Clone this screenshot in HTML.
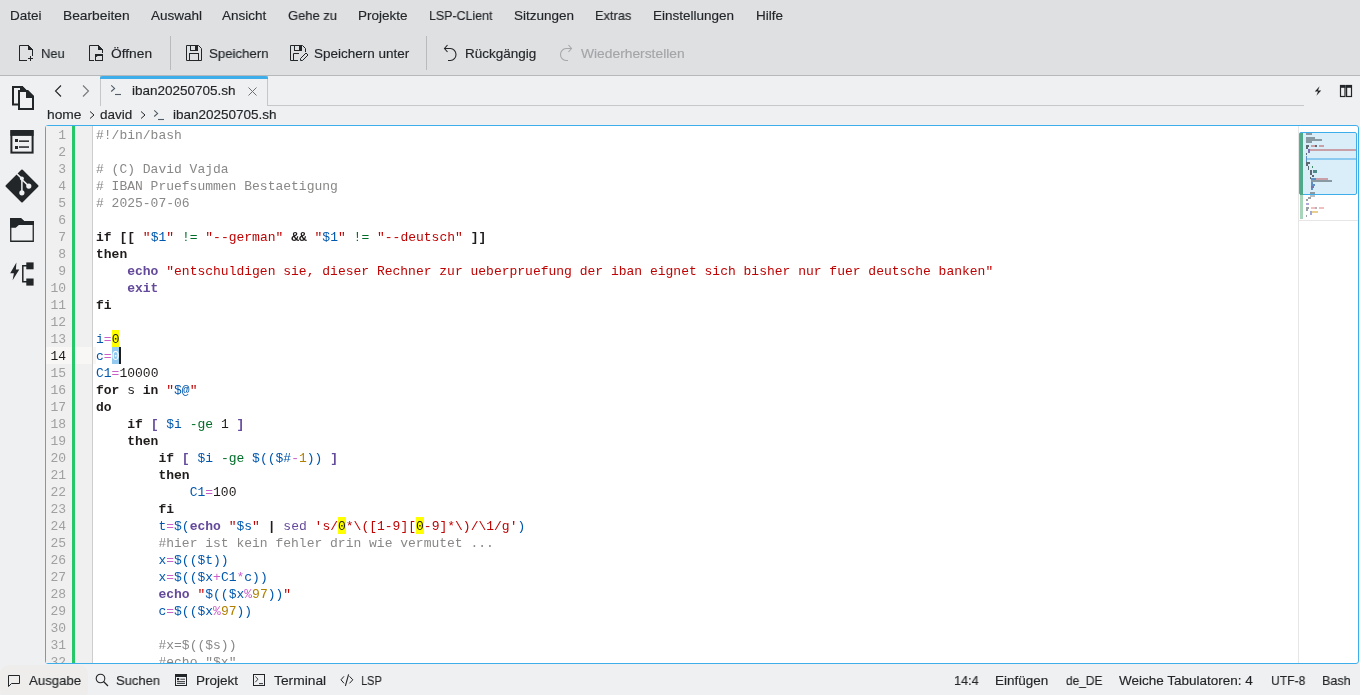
<!DOCTYPE html>
<html><head><meta charset="utf-8"><style>
html,body{margin:0;padding:0}
body{width:1360px;height:695px;overflow:hidden;position:relative;background:#eff0f1;font-family:"Liberation Sans", sans-serif}
.t{position:absolute;white-space:pre;line-height:16px;will-change:transform;-webkit-text-stroke:0.15px currentColor}
.ln{position:absolute;left:45.5px;width:20px;padding-top:1px;text-align:right;font-family:"Liberation Mono", monospace;font-size:13px;line-height:17px;will-change:transform}
.cl{position:absolute;left:96px;padding-top:1px;white-space:pre;font-family:"Liberation Mono", monospace;font-size:13px;line-height:17px;color:#1f1c1b;will-change:transform}
.c{color:#898887} .k{font-weight:bold} .s{color:#bf0303} .v{color:#0057ae} .o{color:#006e28}
.b{color:#644a9b;font-weight:bold} .f{color:#644a9b} .p{color:#ca60ca} .d{color:#b08000}
.hl{} .shl{color:#1f1c1b} .sel{color:#fff}
</style></head><body>
<div style="position:absolute;left:0px;top:0px;width:1360px;height:75px;background:#dee0e2;"></div>
<div style="position:absolute;left:0px;top:75px;width:1360px;height:1px;background:#b6b9bc;"></div>
<div class="t" style="left:10.0px;top:8px;font-size:13.5px;color:#232629;">Datei</div>
<div class="t" style="left:62.699999999999996px;top:8px;font-size:13.5px;color:#232629;transform:scaleX(1.021);transform-origin:0 0;">Bearbeiten</div>
<div class="t" style="left:150.60000000000002px;top:8px;font-size:13.5px;color:#232629;">Auswahl</div>
<div class="t" style="left:222.3px;top:8px;font-size:13.5px;color:#232629;">Ansicht</div>
<div class="t" style="left:287.8px;top:8px;font-size:13.5px;color:#232629;transform:scaleX(0.961);transform-origin:0 0;">Gehe zu</div>
<div class="t" style="left:357.8px;top:8px;font-size:13.5px;color:#232629;">Projekte</div>
<div class="t" style="left:428.90000000000003px;top:8px;font-size:13.5px;color:#232629;transform:scaleX(0.919);transform-origin:0 0;">LSP-CLient</div>
<div class="t" style="left:513.6999999999999px;top:8px;font-size:13.5px;color:#232629;">Sitzungen</div>
<div class="t" style="left:594.9px;top:8px;font-size:13.5px;color:#232629;transform:scaleX(0.950);transform-origin:0 0;">Extras</div>
<div class="t" style="left:652.5px;top:8px;font-size:13.5px;color:#232629;">Einstellungen</div>
<div class="t" style="left:755.9px;top:8px;font-size:13.5px;color:#232629;">Hilfe</div>
<div class="t" style="left:40.8px;top:46px;font-size:13.5px;color:#232629;transform:scaleX(0.960);transform-origin:0 0;">Neu</div>
<div class="t" style="left:110.8px;top:46px;font-size:13.5px;color:#232629;transform:scaleX(1.020);transform-origin:0 0;">Öffnen</div>
<div class="t" style="left:208.5px;top:46px;font-size:13.5px;color:#232629;transform:scaleX(0.980);transform-origin:0 0;">Speichern</div>
<div class="t" style="left:313.6px;top:46px;font-size:13.5px;color:#232629;">Speichern unter</div>
<div class="t" style="left:464.7px;top:46px;font-size:13.5px;color:#232629;">Rückgängig</div>
<div class="t" style="left:580.5999999999999px;top:46px;font-size:13.5px;color:#a3a5a7;transform:scaleX(1.023);transform-origin:0 0;">Wiederherstellen</div>
<div style="position:absolute;left:170px;top:36px;width:1px;height:34px;background:#b8bbbe;"></div>
<div style="position:absolute;left:426px;top:36px;width:1px;height:34px;background:#b8bbbe;"></div>
<svg style="position:absolute;left:16px;top:42px" width="20" height="22" viewBox="16 42 20 22" fill="none" stroke="#232629" stroke-width="1"><path d="M19.5 61V45.5H28.5L32.5 49.5V56M19.5 60.5H27M28.5 45.5V49.5H32.5M28 58.5H33M30.5 56V61"/><path d="M28.5 45.5L32.5 49.5H28.5Z" fill="#232629"/></svg>
<svg style="position:absolute;left:86px;top:42px" width="20" height="22" viewBox="86 42 20 22" fill="none" stroke="#232629" stroke-width="1"><path d="M89.5 61V45.5H98.5L102.5 49.5V53M89.5 60.5H94M98.5 45.5V49.5H102.5"/><path d="M98.5 45.5L102.5 49.5H98.5Z" fill="#232629"/><rect x="95.5" y="54.5" width="7" height="6"/><path d="M95 54H98.5L99.5 55H103V56H97.5L96.5 57H95Z" fill="#232629" stroke="none"/></svg>
<svg style="position:absolute;left:184px;top:42px" width="20" height="22" viewBox="184 42 20 22" fill="none" stroke="#232629" stroke-width="1"><path d="M186.5 45.5H198.5L201.5 48.5V60.5H186.5Z"/><rect x="190.5" y="45.5" width="7" height="5"/><rect x="195" y="45" width="3" height="6" fill="#232629" stroke="none"/><rect x="189.5" y="53.5" width="9" height="7"/></svg>
<svg style="position:absolute;left:288px;top:42px" width="22" height="22" viewBox="288 42 22 22" fill="none" stroke="#232629" stroke-width="1"><path d="M298 60.5H290.5V45.5H302.5L305.5 48.5V52M293.5 60.5V53.5H299"/><rect x="294.5" y="45.5" width="7" height="5"/><rect x="299" y="45" width="3" height="6" fill="#232629" stroke="none"/><path d="M300.5 60.5V58.5L306 53L308 55L302.5 60.5Z"/></svg>
<svg style="position:absolute;left:440px;top:42px" width="20" height="22" viewBox="440 42 20 22" fill="none" stroke="#232629" stroke-width="1"><path d="M447.5 45L444.5 48.5L447.5 52M444.5 48.5H450.5A5.5 6 0 0 1 450.5 60.5H448" stroke-width="1.1"/></svg>
<svg style="position:absolute;left:556px;top:42px" width="20" height="22" viewBox="556 42 20 22" fill="none" stroke="#232629" stroke-width="1"><path d="M568.5 45L571.5 48.5L568.5 52M571.5 48.5H566A5.5 6 0 0 0 566 60.5H568" stroke="#a5a7a9" stroke-width="1.1"/></svg>
<svg style="position:absolute;left:8px;top:82px" width="30" height="32" viewBox="8 82 30 32" fill="none" stroke="#232629" stroke-width="1"><path d="M19 104.5H13V87H22L26.5 91.5" stroke-width="2"/><path d="M20 86H22.4L26.6 90.2V91H20Z" fill="#232629" stroke="none"/><path d="M18 90H27.7L34 96.3V110H18Z" fill="#eff0f1" stroke="none"/><path d="M19 91H27.3L33 96.7V109H19Z" stroke-width="2"/><path d="M26 90H28L34 96V98H26Z" fill="#232629" stroke="none"/></svg>
<svg style="position:absolute;left:8px;top:126px" width="30" height="32" viewBox="8 126 30 32" fill="none" stroke="#232629" stroke-width="1"><rect x="11.4" y="131.1" width="21.2" height="21.5" stroke-width="2"/><rect x="10.4" y="130.1" width="23.2" height="5.8" fill="#232629" stroke="none"/><rect x="15" y="139" width="3" height="3" fill="#232629" stroke="none"/><rect x="15" y="146" width="3" height="3" fill="#232629" stroke="none"/><rect x="19" y="140.4" width="10" height="1.5" fill="#232629" stroke="none"/><rect x="19" y="146.3" width="10" height="1.5" fill="#232629" stroke="none"/></svg>
<svg style="position:absolute;left:2px;top:166px" width="40" height="40" viewBox="2 166 40 40" fill="none" stroke="#232629" stroke-width="1"><path d="M22 170.5L37.5 186L22 201.5L6.5 186Z" fill="#232629" stroke-width="2" stroke-linejoin="round"/><path d="M15.5 172.5L21.9 178.6V192.8M21.9 179.5L28.8 186.1" stroke="#eff0f1" stroke-width="1.5"/><circle cx="21.9" cy="178.6" r="2" fill="#eff0f1" stroke="none"/><circle cx="28.8" cy="186.1" r="2.6" fill="#eff0f1" stroke="none"/><circle cx="21.9" cy="192.8" r="2.6" fill="#eff0f1" stroke="none"/></svg>
<svg style="position:absolute;left:6px;top:214px" width="34" height="32" viewBox="6 214 34 32" fill="none" stroke="#232629" stroke-width="1"><path d="M10.75 218.75H20.7L24 221.75H33.25V241.25H10.75Z" stroke-width="1.3"/><path d="M10.1 218.1H20.7L24 221.1H33.9V225H18.9L15.7 227.8H10.1Z" fill="#232629" stroke="none"/></svg>
<svg style="position:absolute;left:6px;top:258px" width="34" height="32" viewBox="6 258 34 32" fill="none" stroke="#232629" stroke-width="1"><path d="M16.4 262.6L10.2 273.3H13.9L12.6 280.2L19.3 269.4H15.9Z" fill="#232629" stroke="none"/><path d="M27 265.7H22.8V281.7H27" stroke-width="1.5"/><rect x="26.3" y="262.4" width="7.3" height="6.9" fill="#232629" stroke="none"/><rect x="26.3" y="278.5" width="7.3" height="7.1" fill="#232629" stroke="none"/></svg>
<svg style="position:absolute;left:53px;top:84px" width="10" height="14" viewBox="0 0 10 14"><path d="M8 1.5L2.5 7 8 12.5" fill="none" stroke="#232629" stroke-width="1.1"/></svg>
<svg style="position:absolute;left:81px;top:84px" width="10" height="14" viewBox="0 0 10 14"><path d="M2 1.5L7.5 7 2 12.5" fill="none" stroke="#76787a" stroke-width="1.1"/></svg>
<div style="position:absolute;left:100px;top:76px;width:168px;height:30px;background:#eff0f1;border-left:1px solid #c5c7c9;border-right:1px solid #c5c7c9;box-sizing:border-box"></div>
<div style="position:absolute;left:100px;top:76px;width:168px;height:3px;background:#3daee9;border-radius:2px 2px 0 0"></div>
<div style="position:absolute;left:267px;top:105px;width:1037px;height:1px;background:#c5c7c9;"></div>
<svg style="position:absolute;left:110px;top:84px" width="12" height="12" viewBox="0 0 12 12"><path d="M1.2 1.3L4.6 4.4L1.2 7.5" fill="none" stroke="#4f5b67" stroke-width="1.1"/><path d="M5 10.5h6" stroke="#4f5b67" stroke-width="1.1"/></svg>
<div class="t" style="left:132px;top:83px;font-size:13.5px;color:#232629;">iban20250705.sh</div>
<svg style="position:absolute;left:246.5px;top:86px" width="11" height="11" viewBox="0 0 11 11"><path d="M1.5 1.5l8 8M9.5 1.5l-8 8" stroke="#6e7072" stroke-width="1"/></svg>
<svg style="position:absolute;left:1310px;top:82px" width="16" height="18" viewBox="1310 82 16 18" fill="none" stroke="#232629" stroke-width="1"><path d="M1319.6 86.3L1314.8 91.6H1318L1316.4 95.8L1321.2 90.4H1318Z" fill="#232629" stroke="none"/></svg>
<svg style="position:absolute;left:1336px;top:82px" width="20" height="18" viewBox="1336 82 20 18" fill="none" stroke="#232629" stroke-width="1"><rect x="1340.5" y="85.5" width="4.5" height="11" stroke-width="1.2"/><rect x="1346.6" y="85.5" width="4.9" height="11" stroke-width="1.2"/><rect x="1340" y="85" width="5.5" height="2.8" fill="#232629" stroke="none"/><rect x="1346" y="85" width="6" height="2.8" fill="#232629" stroke="none"/></svg>
<div class="t" style="left:47px;top:107px;font-size:13.5px;color:#232629;transform:scaleX(1.021);transform-origin:0 0;">home</div>
<svg style="position:absolute;left:88px;top:109px" width="8" height="12" viewBox="0 0 8 12"><path d="M2 2.5l4 3.5-4 3.5" fill="none" stroke="#232629" stroke-width="1"/></svg>
<div class="t" style="left:99.8px;top:107px;font-size:13.5px;color:#232629;">david</div>
<svg style="position:absolute;left:139px;top:109px" width="8" height="12" viewBox="0 0 8 12"><path d="M2 2.5l4 3.5-4 3.5" fill="none" stroke="#232629" stroke-width="1"/></svg>
<svg style="position:absolute;left:153px;top:109px" width="12" height="12" viewBox="0 0 12 12"><path d="M1.2 1.3L4.6 4.4L1.2 7.5" fill="none" stroke="#4f5b67" stroke-width="1.1"/><path d="M5 10.5h6" stroke="#4f5b67" stroke-width="1.1"/></svg>
<div class="t" style="left:173px;top:107px;font-size:13.5px;color:#232629;">iban20250705.sh</div>
<div style="position:absolute;left:45px;top:125px;width:1314px;height:539px;box-sizing:border-box;border:1px solid #3daee9;border-radius:3px;background:#fff;overflow:hidden">
</div>
<div style="position:absolute;left:0;top:0;width:1360px;height:663px;overflow:hidden">
<div style="position:absolute;left:46px;top:126px;width:26px;height:537px;background:#f0f0f0;"></div>
<div style="position:absolute;left:72px;top:126px;width:3px;height:537px;background:#27c86a;"></div>
<div style="position:absolute;left:75px;top:126px;width:17px;height:537px;background:#f0f0f0;"></div>
<div style="position:absolute;left:92px;top:126px;width:1px;height:537px;background:#cdcdcd;"></div>
<div style="position:absolute;left:46px;top:347px;width:26px;height:17px;background:#f8f7f6;"></div>
<div style="position:absolute;left:75px;top:347px;width:17px;height:17px;background:#f8f7f6;"></div>
<div style="position:absolute;left:93px;top:347px;width:3px;height:17px;background:#f8f7f6;"></div>
<div class="ln" style="top:126px;color:#a0a0a0">1</div>
<div class="ln" style="top:143px;color:#a0a0a0">2</div>
<div class="ln" style="top:160px;color:#a0a0a0">3</div>
<div class="ln" style="top:177px;color:#a0a0a0">4</div>
<div class="ln" style="top:194px;color:#a0a0a0">5</div>
<div class="ln" style="top:211px;color:#a0a0a0">6</div>
<div class="ln" style="top:228px;color:#a0a0a0">7</div>
<div class="ln" style="top:245px;color:#a0a0a0">8</div>
<div class="ln" style="top:262px;color:#a0a0a0">9</div>
<div class="ln" style="top:279px;color:#a0a0a0">10</div>
<div class="ln" style="top:296px;color:#a0a0a0">11</div>
<div class="ln" style="top:313px;color:#a0a0a0">12</div>
<div class="ln" style="top:330px;color:#a0a0a0">13</div>
<div class="ln" style="top:347px;color:#1f1c1b">14</div>
<div class="ln" style="top:364px;color:#a0a0a0">15</div>
<div class="ln" style="top:381px;color:#a0a0a0">16</div>
<div class="ln" style="top:398px;color:#a0a0a0">17</div>
<div class="ln" style="top:415px;color:#a0a0a0">18</div>
<div class="ln" style="top:432px;color:#a0a0a0">19</div>
<div class="ln" style="top:449px;color:#a0a0a0">20</div>
<div class="ln" style="top:466px;color:#a0a0a0">21</div>
<div class="ln" style="top:483px;color:#a0a0a0">22</div>
<div class="ln" style="top:500px;color:#a0a0a0">23</div>
<div class="ln" style="top:517px;color:#a0a0a0">24</div>
<div class="ln" style="top:534px;color:#a0a0a0">25</div>
<div class="ln" style="top:551px;color:#a0a0a0">26</div>
<div class="ln" style="top:568px;color:#a0a0a0">27</div>
<div class="ln" style="top:585px;color:#a0a0a0">28</div>
<div class="ln" style="top:602px;color:#a0a0a0">29</div>
<div class="ln" style="top:619px;color:#a0a0a0">30</div>
<div class="ln" style="top:636px;color:#a0a0a0">31</div>
<div class="ln" style="top:653px;color:#a0a0a0">32</div>
<div style="position:absolute;left:111.6px;top:330px;width:7.8px;height:17px;background:#ffff00;"></div>
<div style="position:absolute;left:111.6px;top:347px;width:7.8px;height:17px;background:#94caef;"></div>
<div style="position:absolute;left:337.8px;top:517px;width:7.8px;height:17px;background:#ffff00;"></div>
<div style="position:absolute;left:415.8px;top:517px;width:7.8px;height:17px;background:#ffff00;"></div>
<div class="cl" style="top:126px"><span class="c">#!/bin/bash</span></div>
<div class="cl" style="top:143px"></div>
<div class="cl" style="top:160px"><span class="c"># (C) David Vajda</span></div>
<div class="cl" style="top:177px"><span class="c"># IBAN Pruefsummen Bestaetigung</span></div>
<div class="cl" style="top:194px"><span class="c"># 2025-07-06</span></div>
<div class="cl" style="top:211px"></div>
<div class="cl" style="top:228px"><span class="k">if [[</span><span class="n"> </span><span class="s">&quot;</span><span class="v">$1</span><span class="s">&quot;</span><span class="n"> </span><span class="o">!=</span><span class="n"> </span><span class="s">&quot;--german&quot;</span><span class="n"> </span><span class="k">&amp;&amp;</span><span class="n"> </span><span class="s">&quot;</span><span class="v">$1</span><span class="s">&quot;</span><span class="n"> </span><span class="o">!=</span><span class="n"> </span><span class="s">&quot;--deutsch&quot;</span><span class="n"> </span><span class="k">]]</span></div>
<div class="cl" style="top:245px"><span class="k">then</span></div>
<div class="cl" style="top:262px"><span class="n">    </span><span class="b">echo</span><span class="n"> </span><span class="s">&quot;entschuldigen sie, dieser Rechner zur ueberpruefung der iban eignet sich bisher nur fuer deutsche banken&quot;</span></div>
<div class="cl" style="top:279px"><span class="n">    </span><span class="b">exit</span></div>
<div class="cl" style="top:296px"><span class="k">fi</span></div>
<div class="cl" style="top:313px"></div>
<div class="cl" style="top:330px"><span class="v">i</span><span class="p">=</span><span class="hl">0</span></div>
<div class="cl" style="top:347px"><span class="v">c</span><span class="p">=</span><span class="sel">0</span></div>
<div class="cl" style="top:364px"><span class="v">C1</span><span class="p">=</span><span class="n">10000</span></div>
<div class="cl" style="top:381px"><span class="k">for</span><span class="n"> s </span><span class="k">in</span><span class="n"> </span><span class="s">&quot;</span><span class="v">$@</span><span class="s">&quot;</span></div>
<div class="cl" style="top:398px"><span class="k">do</span></div>
<div class="cl" style="top:415px"><span class="n">    </span><span class="k">if</span><span class="n"> </span><span class="b">[</span><span class="n"> </span><span class="v">$i</span><span class="n"> </span><span class="o">-ge</span><span class="n"> 1 </span><span class="b">]</span></div>
<div class="cl" style="top:432px"><span class="n">    </span><span class="k">then</span></div>
<div class="cl" style="top:449px"><span class="n">        </span><span class="k">if</span><span class="n"> </span><span class="b">[</span><span class="n"> </span><span class="v">$i</span><span class="n"> </span><span class="o">-ge</span><span class="n"> </span><span class="v">$(($#</span><span class="p">-</span><span class="d">1</span><span class="v">))</span><span class="n"> </span><span class="b">]</span></div>
<div class="cl" style="top:466px"><span class="n">        </span><span class="k">then</span></div>
<div class="cl" style="top:483px"><span class="n">            </span><span class="v">C1</span><span class="p">=</span><span class="n">100</span></div>
<div class="cl" style="top:500px"><span class="n">        </span><span class="k">fi</span></div>
<div class="cl" style="top:517px"><span class="n">        </span><span class="v">t</span><span class="p">=</span><span class="v">$(</span><span class="b">echo</span><span class="n"> </span><span class="s">&quot;</span><span class="v">$s</span><span class="s">&quot;</span><span class="n"> </span><span class="k">|</span><span class="n"> </span><span class="f">sed</span><span class="n"> </span><span class="s">&#x27;s/</span><span class="shl">0</span><span class="s">*\([1-9][</span><span class="shl">0</span><span class="s">-9]*\)/\1/g&#x27;</span><span class="v">)</span></div>
<div class="cl" style="top:534px"><span class="n">        </span><span class="c">#hier ist kein fehler drin wie vermutet ...</span></div>
<div class="cl" style="top:551px"><span class="n">        </span><span class="v">x</span><span class="p">=</span><span class="v">$(($t))</span></div>
<div class="cl" style="top:568px"><span class="n">        </span><span class="v">x</span><span class="p">=</span><span class="v">$(($x</span><span class="p">+</span><span class="v">C1</span><span class="p">*</span><span class="v">c))</span></div>
<div class="cl" style="top:585px"><span class="n">        </span><span class="b">echo</span><span class="n"> </span><span class="s">&quot;</span><span class="v">$(($x</span><span class="p">%</span><span class="d">97</span><span class="v">))</span><span class="s">&quot;</span></div>
<div class="cl" style="top:602px"><span class="n">        </span><span class="v">c</span><span class="p">=</span><span class="v">$(($x</span><span class="p">%</span><span class="d">97</span><span class="v">))</span></div>
<div class="cl" style="top:619px"></div>
<div class="cl" style="top:636px"><span class="n">        </span><span class="c">#x=$(($s))</span></div>
<div class="cl" style="top:653px"><span class="n">        </span><span class="c">#echo &quot;$x&quot;</span></div>
<div style="position:absolute;left:119px;top:347px;width:2px;height:17px;background:#1f1c1b;"></div>
</div>
<div style="position:absolute;left:1298px;top:126px;width:1px;height:537px;background:#e6e6e6;"></div>
<div style="position:absolute;left:1299px;top:220px;width:59px;height:1px;background:#e6e6e6;"></div>
<div style="position:absolute;left:1299px;top:132px;width:58px;height:63px;background:#daeefa;box-sizing:border-box;border:1px solid #3daee9;border-radius:2px"></div>
<div style="position:absolute;left:1300px;top:133px;width:3px;height:62px;background:#4fa889;"></div>
<div style="position:absolute;left:1300px;top:195px;width:3px;height:24px;background:#a8d5b9;"></div>
<div style="position:absolute;left:1306px;top:133px;width:6.00px;height:2.00px;background:#8a9aa3"></div>
<div style="position:absolute;left:1306px;top:137px;width:8.70px;height:2.00px;background:#8a9aa3"></div>
<div style="position:absolute;left:1306px;top:139px;width:16.00px;height:2.00px;background:#8a9aa3"></div>
<div style="position:absolute;left:1306px;top:141px;width:6.00px;height:2.00px;background:#8a9aa3"></div>
<div style="position:absolute;left:1306px;top:145px;width:3.00px;height:2.00px;background:#5d6870"></div>
<div style="position:absolute;left:1311px;top:145px;width:3.80px;height:2.00px;background:#c9a0a8"></div>
<div style="position:absolute;left:1314.8px;top:145px;width:2.20px;height:2.00px;background:#5d6870"></div>
<div style="position:absolute;left:1319px;top:145px;width:5.00px;height:2.00px;background:#c9a0a8"></div>
<div style="position:absolute;left:1306px;top:147px;width:2.00px;height:2.00px;background:#5d6870"></div>
<div style="position:absolute;left:1308px;top:149px;width:2.00px;height:2.00px;background:#7a6fb0"></div>
<div style="position:absolute;left:1310px;top:149px;width:46.00px;height:2.00px;background:#c9a0a8"></div>
<div style="position:absolute;left:1308px;top:151px;width:2.00px;height:2.00px;background:#7a6fb0"></div>
<div style="position:absolute;left:1306px;top:153px;width:1.00px;height:2.00px;background:#5d6870"></div>
<div style="position:absolute;left:1306px;top:157px;width:1.00px;height:2.00px;background:#5d8fc4"></div>
<div style="position:absolute;left:1306px;top:158.4px;width:50.00px;height:1.60px;background:#8ccaf0"></div>
<div style="position:absolute;left:1306px;top:156px;width:1.00px;height:7.00px;background:#5d8fc4"></div>
<div style="position:absolute;left:1306.2px;top:161.7px;width:3.90px;height:2.10px;background:#5d6870"></div>
<div style="position:absolute;left:1306px;top:163.8px;width:1.60px;height:2.20px;background:#5d6870"></div>
<div style="position:absolute;left:1308px;top:166px;width:1.40px;height:2.00px;background:#5d6870"></div>
<div style="position:absolute;left:1311.5px;top:166px;width:1.00px;height:2.00px;background:#3f8a66"></div>
<div style="position:absolute;left:1308px;top:168px;width:1.40px;height:2.00px;background:#5d6870"></div>
<div style="position:absolute;left:1310px;top:170px;width:1.50px;height:2.50px;background:#5d6870"></div>
<div style="position:absolute;left:1313.4px;top:170px;width:3.50px;height:2.50px;background:#4f8a8a"></div>
<div style="position:absolute;left:1310px;top:172.5px;width:1.50px;height:2.10px;background:#5d6870"></div>
<div style="position:absolute;left:1312px;top:174.6px;width:1.70px;height:2.20px;background:#5d6870"></div>
<div style="position:absolute;left:1310px;top:176.8px;width:1.00px;height:2.20px;background:#5d6870"></div>
<div style="position:absolute;left:1310.8px;top:178px;width:5.20px;height:2.00px;background:#5d8fc4"></div>
<div style="position:absolute;left:1316px;top:178px;width:12.00px;height:2.00px;background:#c9a0a8"></div>
<div style="position:absolute;left:1310.8px;top:180px;width:21.20px;height:2.00px;background:#8a9aa3"></div>
<div style="position:absolute;left:1310.8px;top:182px;width:2.20px;height:2.00px;background:#5d8fc4"></div>
<div style="position:absolute;left:1310.8px;top:184px;width:4.00px;height:2.00px;background:#5d8fc4"></div>
<div style="position:absolute;left:1310.8px;top:186px;width:2.90px;height:2.00px;background:#7a6fb0"></div>
<div style="position:absolute;left:1310.8px;top:188px;width:2.20px;height:2.00px;background:#5d8fc4"></div>
<div style="position:absolute;left:1310px;top:192px;width:4.80px;height:2.00px;background:#8a9aa3"></div>
<div style="position:absolute;left:1310px;top:194.7px;width:4.80px;height:1.90px;background:#b9bfc3"></div>
<div style="position:absolute;left:1307.6px;top:197px;width:3.20px;height:2.00px;background:#9aa0a4"></div>
<div style="position:absolute;left:1306px;top:199px;width:1.60px;height:1.50px;background:#9aa0a4"></div>
<div style="position:absolute;left:1306px;top:202.7px;width:3.00px;height:2.10px;background:#b0a8d8"></div>
<div style="position:absolute;left:1306px;top:207px;width:2.50px;height:2.00px;background:#9aa0a4"></div>
<div style="position:absolute;left:1310.8px;top:207px;width:4.20px;height:2.00px;background:#f0c0c0"></div>
<div style="position:absolute;left:1315px;top:207px;width:2.00px;height:2.00px;background:#b0b4b8"></div>
<div style="position:absolute;left:1319px;top:207px;width:4.80px;height:2.00px;background:#f0c0c0"></div>
<div style="position:absolute;left:1306px;top:209px;width:1.60px;height:2.00px;background:#9aa0a4"></div>
<div style="position:absolute;left:1309.5px;top:211px;width:2.30px;height:2.00px;background:#a0a8d8"></div>
<div style="position:absolute;left:1311.8px;top:211px;width:5.90px;height:2.00px;background:#e8d090"></div>
<div style="position:absolute;left:1309.5px;top:213px;width:2.00px;height:2.00px;background:#a0a8d8"></div>
<div style="position:absolute;left:1306px;top:215px;width:1.00px;height:2.00px;background:#9aa0a4"></div>
<div style="position:absolute;left:0px;top:665px;width:88px;height:34px;background:#eeedeb;border-radius:9px"></div>
<svg style="position:absolute;left:7px;top:674px" width="14" height="13" viewBox="0 0 14 13"><path d="M1.5 1.5h11v8h-8l-3 3z" fill="none" stroke="#232629"/></svg>
<div class="t" style="left:28.7px;top:673px;font-size:13.5px;color:#232629;transform:scaleX(0.979);transform-origin:0 0;">Ausgabe</div>
<svg style="position:absolute;left:95px;top:673px" width="14" height="14" viewBox="0 0 14 14"><circle cx="5.5" cy="5.5" r="4.3" fill="none" stroke="#232629" stroke-width="1.1"/><path d="M8.5 8.5l4.5 4.5" stroke="#232629" stroke-width="1.2"/></svg>
<div class="t" style="left:116.2px;top:673px;font-size:13.5px;color:#232629;transform:scaleX(0.963);transform-origin:0 0;">Suchen</div>
<svg style="position:absolute;left:175px;top:674px" width="12" height="12" viewBox="0 0 12 12"><rect x="0.5" y="0.5" width="11" height="11" fill="none" stroke="#232629"/><rect x="0.5" y="0.5" width="11" height="2.5" fill="#232629"/><rect x="2" y="4" width="2.2" height="2.2" fill="#232629"/><path d="M5.3 5.2h4.7M2 7.6h8M2 9.4h8" stroke="#232629" stroke-width="0.9"/></svg>
<div class="t" style="left:195.8px;top:673px;font-size:13.5px;color:#232629;">Projekt</div>
<svg style="position:absolute;left:253px;top:674px" width="12" height="12" viewBox="0 0 12 12"><rect x="0.5" y="0.5" width="11" height="11" fill="none" stroke="#232629"/><path d="M2.3 2.5L5 5.2L2.3 8.2M6 9.6h4" fill="none" stroke="#232629" stroke-width="0.9"/></svg>
<div class="t" style="left:273.8px;top:673px;font-size:13.5px;color:#232629;transform:scaleX(1.022);transform-origin:0 0;">Terminal</div>
<svg style="position:absolute;left:340px;top:673px" width="14" height="14" viewBox="0 0 14 14"><path d="M4 3.3L1 6.8 4 10.3M9.5 3.3L12.8 6.8 9.5 10.3" fill="none" stroke="#232629"/><path d="M8.6 1.3L5.4 12.8" fill="none" stroke="#232629" stroke-width="1.1"/></svg>
<div class="t" style="left:361.2px;top:673px;font-size:13.5px;color:#232629;transform:scaleX(0.816);transform-origin:0 0;">LSP</div>
<div class="t" style="left:954.3px;top:673px;font-size:13.5px;color:#232629;transform:scaleX(0.939);transform-origin:0 0;">14:4</div>
<div class="t" style="left:995.4px;top:673px;font-size:13.5px;color:#232629;">Einfügen</div>
<div class="t" style="left:1066.0px;top:673px;font-size:13.5px;color:#232629;transform:scaleX(0.884);transform-origin:0 0;">de_DE</div>
<div class="t" style="left:1119.3px;top:673px;font-size:13.5px;color:#232629;">Weiche Tabulatoren: 4</div>
<div class="t" style="left:1270.6px;top:673px;font-size:13.5px;color:#232629;transform:scaleX(0.898);transform-origin:0 0;">UTF-8</div>
<div class="t" style="left:1321.8px;top:673px;font-size:13.5px;color:#232629;transform:scaleX(0.932);transform-origin:0 0;">Bash</div>
</body></html>
